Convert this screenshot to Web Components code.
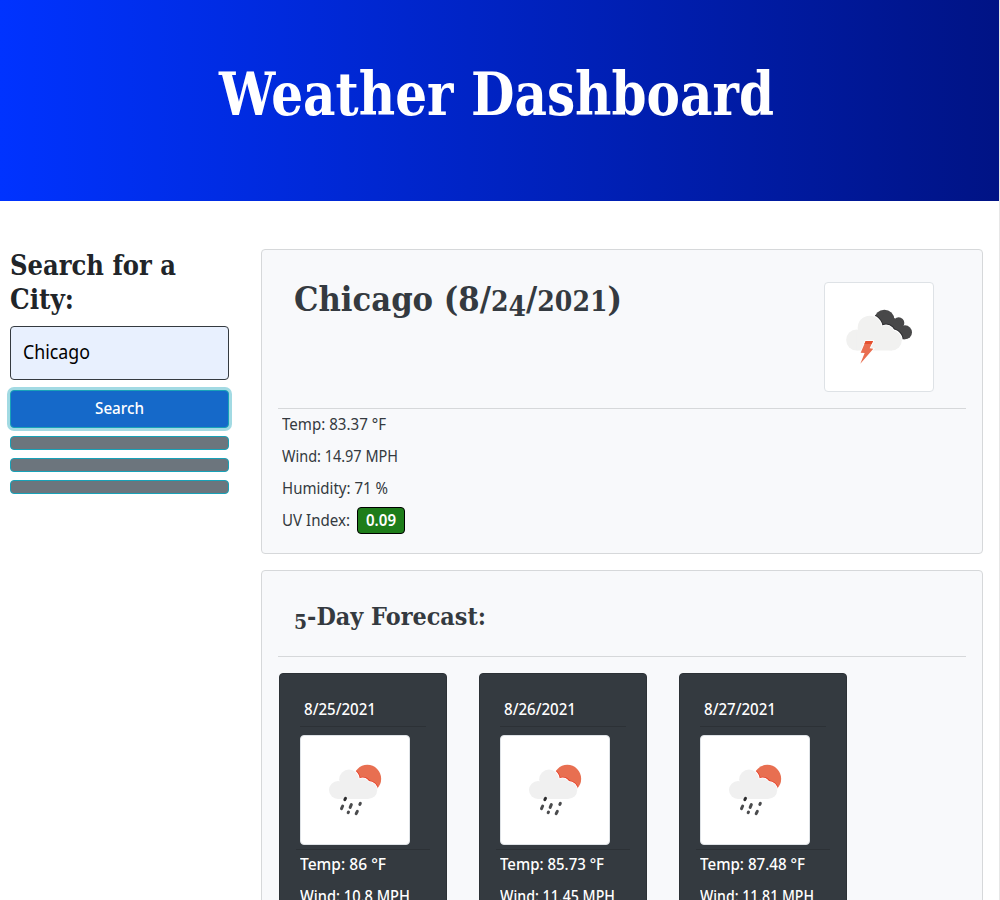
<!DOCTYPE html>
<html lang="en">
<head>
<meta charset="utf-8">
<title>Weather Dashboard</title>
<style>
html,body{margin:0;height:900px;overflow:hidden;background:#fff}
body{font-family:"Noto Sans","Open Sans",sans-serif;color:#212529}
</style>
</head>
<body>
<weather-dashboard></weather-dashboard>
<script>
const define = (name, html, setup) => customElements.define(name, class extends HTMLElement {
  connectedCallback() {
    if (this.shadowRoot) return;
    const t = document.createElement('template');
    t.innerHTML = typeof html === 'function' ? html(this) : html;
    this.attachShadow({mode: 'open'}).append(t.content.cloneNode(true));
    if (setup) setup(this);
  }
});

define('weather-dashboard', `
<style>
:host{display:block;box-sizing:border-box;height:900px;overflow:hidden;border-right:1px solid #e7e7e7}
main{display:grid;grid-template-columns:219px 722px;column-gap:32px;padding:48px 0 0 10px;align-items:start}
section{display:grid;row-gap:16px}
</style>
<page-header></page-header>
<main><city-search></city-search><section><current-weather></current-weather><five-day></five-day></section></main>`);

define('page-header', `
<style>
:host{display:flex;box-sizing:border-box;height:201px;background:linear-gradient(to right,#0033ff,#001385);padding:60px 0 0 219px}
h1{margin:0;font:bold 59px/70px "DejaVu Serif",serif;color:#fff}
</style>
<h1><fit-text w="555">Weather Dashboard</fit-text></h1>`);

define('city-search', `
<style>
:host{display:flex;flex-direction:column}
h2{margin:-1px 0 10px;font:bold 28.5px/34px "DejaVu Serif",serif;color:#212529}
h2 fit-text{display:block}
.field{box-sizing:border-box;height:54px;border:1px solid #343a40;border-radius:4px;background:#e8f0fe;padding:0 12px;font-size:19px;line-height:51px;color:#000}
.go{box-sizing:border-box;height:38px;margin-top:10px;border:1px solid #17a2b8;border-radius:4px;background:#1569c9;color:#fff;text-align:center;font-size:15.5px;font-weight:500;line-height:35px;box-shadow:0 0 0 3px #a2dae3}
.past{box-sizing:border-box;height:14px;margin-top:8px;border:1px solid #17a2b8;border-radius:4px;background:#6c757d}
</style>
<h2><fit-text w="166">Search for a</fit-text><fit-text w="64">City:</fit-text></h2>
<div class="field"><fit-text w="67">Chicago</fit-text></div>
<div class="go"><fit-text w="49">Search</fit-text></div>
<div class="past"></div><div class="past"></div><div class="past"></div>`);

define('current-weather', `
<style>
:host{display:block;box-sizing:border-box;height:305px;border:1px solid #d6d8da;border-radius:4px;background:#f8f9fb;padding:0 16px;color:#343a40}
.top{display:flex;justify-content:space-between;align-items:flex-start;box-sizing:border-box;height:159px;padding:32px 32px 0 16px;border-bottom:1px solid #d6d8da}
h2{margin:-1px 0 0;font:bold 33px/38px "DejaVu Serif",serif}
h2 span{font-size:.82em;line-height:0}
h2 .low{vertical-align:-5px}
.rows{margin-top:-1px}
.row{display:flex;align-items:center;height:32px;padding-left:4px;font-size:15.5px}
b{display:flex;align-items:center;justify-content:center;box-sizing:border-box;width:48px;height:27px;margin-left:7px;border:1px solid #000;border-radius:4px;background:#1e7d1a;color:#fff;font-weight:600}
</style>
<div class="top"><h2><fit-text w="328">Chicago (8/<span>2</span><span class="low">4</span>/<span>2021</span>)</fit-text></h2><weather-icon kind="storm"></weather-icon></div>
<div class="rows">
<div class="row"><fit-text w="104">Temp: 83.37 °F</fit-text></div>
<div class="row"><fit-text w="116">Wind: 14.97 MPH</fit-text></div>
<div class="row"><fit-text w="106">Humidity: 71 %</fit-text></div>
<div class="row"><fit-text w="68">UV Index:</fit-text><b><fit-text w="30">0.09</fit-text></b></div>
</div>`);

define('five-day', `
<style>
:host{display:block;box-sizing:border-box;height:460px;border:1px solid #d6d8da;border-radius:4px;background:#f8f9fb;padding:0 16px;color:#343a40}
.top{box-sizing:border-box;height:86px;padding:28px 0 0 16px;border-bottom:1px solid #d6d8da}
h3{margin:0;font:bold 25px/35px "DejaVu Serif",serif}
h3 span{font-size:.84em;line-height:0;vertical-align:-4px}
.days{display:flex;gap:32px;padding:16px 1px 0}
</style>
<div class="top"><h3><fit-text w="192"><span>5</span>-Day Forecast:</fit-text></h3></div>
<div class="days">
<day-card date="8/25/2021" temp="86" tw="86" wind="10.8" ww="110"></day-card>
<day-card date="8/26/2021" temp="85.73" tw="104" wind="11.45" ww="115"></day-card>
<day-card date="8/27/2021" temp="87.48" tw="105" wind="11.81" ww="114"></day-card>
</div>`);

define('day-card', el => `
<style>
:host{display:block;box-sizing:border-box;width:168px;height:330px;border:1px solid #2c3136;border-radius:4px;background:#343a40;padding:0 16px;color:#fff;font-size:15.5px;font-weight:500}
.date{box-sizing:border-box;height:53px;width:126px;margin-left:4px;padding:19px 0 0 4px;line-height:32px;border-bottom:1px solid #2c3136}
weather-icon{margin:8px 0 4px 4px}
.rows{border-top:1px solid #2c3136;padding-left:4px}
.row{height:32px;line-height:28px;white-space:nowrap}
</style>
<div class="date"><fit-text w="72">${el.getAttribute('date')}</fit-text></div>
<weather-icon kind="rain"></weather-icon>
<div class="rows">
<div class="row"><fit-text w="${el.getAttribute('tw')}">Temp: ${el.getAttribute('temp')} °F</fit-text></div>
<div class="row"><fit-text w="${el.getAttribute('ww')}">Wind: ${el.getAttribute('wind')} MPH</fit-text></div>
</div>`);

const icons = {
  storm: `
<defs><g id="d"><circle cx="181" cy="113" r="30"/><circle cx="224" cy="123" r="17"/><circle cx="243" cy="151" r="21"/><path d="M181 90l30 18 32 30v34h-12l-70-30z"/></g>
<clipPath id="c"><circle cx="181" cy="113" r="30"/><circle cx="224" cy="123" r="17"/><circle cx="243" cy="151" r="21"/><path d="M181 90l30 18 32 30v34h-12l-70-30z"/></clipPath>
<g id="k"><circle cx="137" cy="137" r="36"/><circle cx="98" cy="174" r="31.500"/><circle cx="186" cy="155" r="25"/><circle cx="203" cy="175" r="30.500"/><rect x="98" y="150" width="105" height="55.500"/></g></defs>
<use href="#d" fill="#484849"/>
<use href="#k" clip-path="url(#c)" fill="#2d2d30" stroke="#2d2d30" stroke-width="11"/>
<use href="#k" fill="#fff" stroke="#fff" stroke-width="5"/>
<use href="#k" fill="#f1f1f0"/>
<path d="M125 177h22l-10 22 11 1-39 45 13-32-12-1z" fill="#e96e50" stroke="#fff" stroke-width="5" paint-order="stroke"/>
<path d="M125 177h22l-4 9h-22z" fill="#e5502f"/>`,
  rain: `
<defs><clipPath id="c"><circle cx="202" cy="131" r="41.500"/></clipPath>
<g id="k"><circle cx="147" cy="133" r="29.500"/><circle cx="114" cy="165" r="27"/><circle cx="188" cy="150" r="20"/><circle cx="206" cy="166" r="25.500"/><rect x="114" y="145" width="92" height="47"/></g></defs>
<circle cx="202" cy="131" r="41.500" fill="#e86f51"/>
<use href="#k" clip-path="url(#c)" fill="#e83f28" stroke="#e83f28" stroke-width="10"/>
<use href="#k" fill="#fff" stroke="#fff" stroke-width="5"/>
<use href="#k" fill="#f0f0f0"/>
<g stroke="#4a4b4d" stroke-width="9" stroke-linecap="round"><path stroke="#2b2b2d" d="M136.500 190l-2 4"/><path d="M128 213l-3.500 8M154 209l-3.500 8M145.500 231l-1 2M181 205l-1.500 3M172 229l-3.500 7"/></g>`
};
define('weather-icon', el => `
<style>
:host{display:block;box-sizing:border-box;width:110px;height:110px;border:1px solid #dee2e6;border-radius:4px;background:#fff}
svg{display:block;width:108px;height:108px}
</style>
<svg viewBox="3 3 324 324">${icons[el.getAttribute('kind')]}</svg>`);

/* Sets a run of text to a given width by condensing or widening its glyphs. */
define('fit-text', `
<style>
:host{display:inline-block;white-space:nowrap;overflow:visible;text-align:left}
span{display:inline-block;transform-origin:0 50%}
</style><span><slot></slot></span>`, el => {
  const w = +el.getAttribute('w'), s = el.shadowRoot.querySelector('span');
  const natural = s.getBoundingClientRect().width;
  el.style.width = w + 'px';
  s.style.transform = `scaleX(${w / natural})`;
});
</script>
</body>
</html>
